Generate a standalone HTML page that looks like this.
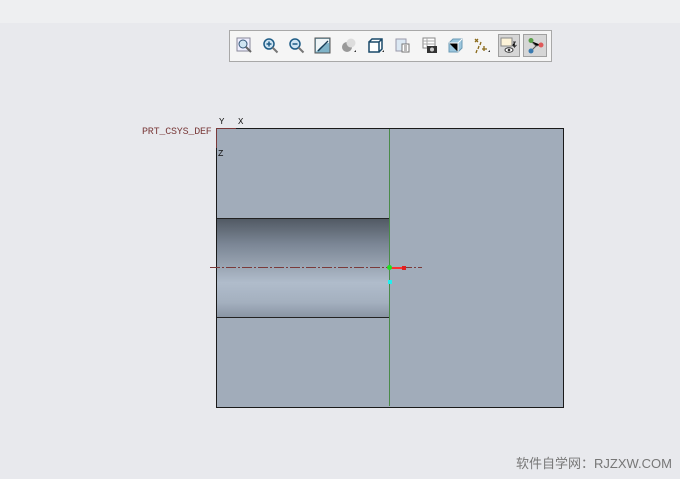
<!DOCTYPE html>
<html><head><style>
*{margin:0;padding:0}
body{width:680px;height:479px;background:#e8e9ed;position:relative;overflow:hidden;font-family:"Liberation Sans",sans-serif}
.a{position:absolute}
svg.i{position:absolute;top:37px;width:17px;height:17px}
</style></head><body>
<div class="a" style="left:0;top:0;width:680px;height:23px;background:#eeeff1"></div>
<div class="a" style="left:229px;top:30px;width:321px;height:30px;background:#f5f5f5;border:1px solid #a8a8a8"></div>
<div class="a" style="left:498px;top:34px;width:22px;height:23px;background:#d6d6d6;border:1px solid #a0a0a0;box-sizing:border-box"></div>
<div class="a" style="left:523px;top:34px;width:24px;height:23px;background:#d6d6d6;border:1px solid #a0a0a0;box-sizing:border-box"></div>
<svg class="i" style="left:236px" viewBox="0 0 17 17"><rect x="1" y="1" width="13" height="13" fill="#eef" stroke="#889"/><circle cx="7" cy="7" r="4" fill="#cfe4f2" stroke="#357"/><path d="M10 10l5 5" stroke="#666" stroke-width="2"/></svg>
<svg class="i" style="left:262px" viewBox="0 0 17 17"><circle cx="7" cy="7" r="5" fill="#cfe4f2" stroke="#1e5c86" stroke-width="1.5"/><path d="M4.5 7h5M7 4.5v5" stroke="#1e5c86" stroke-width="1.5"/><path d="M10.5 10.5l5 5" stroke="#777" stroke-width="2"/></svg>
<svg class="i" style="left:288px" viewBox="0 0 17 17"><circle cx="7" cy="7" r="5" fill="#cfe4f2" stroke="#1e5c86" stroke-width="1.5"/><path d="M4.5 7h5" stroke="#1e5c86" stroke-width="1.5"/><path d="M10.5 10.5l5 5" stroke="#777" stroke-width="2"/></svg>
<svg class="i" style="left:314px" viewBox="0 0 17 17"><rect x="1" y="1" width="15" height="15" fill="#7fb3c8" stroke="#555"/><path d="M2 2h13v4q-6 0-13 9z" fill="#eef4f6"/><path d="M4 14L14 4" stroke="#1a3d55" stroke-width="1.3"/></svg>
<svg class="i" style="left:340px" viewBox="0 0 17 17"><circle cx="7" cy="10" r="5" fill="#999"/><circle cx="11" cy="6" r="4.5" fill="#ddd"/><path d="M14 15h2v-2z" fill="#333"/></svg>
<svg class="i" style="left:367px" viewBox="0 0 17 17"><path d="M2 5h10v10H2zM2 5l3-3h10v10l-3 3M12 5l3-3" fill="#fff" stroke="#1a4a6a" stroke-width="1.5"/><path d="M15 15h2v-2z" fill="#333"/></svg>
<svg class="i" style="left:394px" viewBox="0 0 17 17"><rect x="2" y="2" width="10" height="12" fill="#dbe8f3" stroke="#99a"/><rect x="8" y="7" width="7" height="8" fill="#fff" stroke="#777"/><path d="M10 9h3M10 11h3M10 13h3" stroke="#777"/></svg>
<svg class="i" style="left:421px" viewBox="0 0 17 17"><rect x="2" y="1" width="12" height="10" fill="#fff" stroke="#888"/><path d="M2 4h12M2 7h12M6 1v10" stroke="#aaa"/><rect x="6" y="9" width="10" height="7" fill="#333"/><circle cx="11" cy="12.5" r="2" fill="#ccc"/></svg>
<svg class="i" style="left:447px" viewBox="0 0 17 17"><path d="M2 6l4-4h9v9l-4 4H2z" fill="#9cc7de" stroke="#6a9ab5"/><path d="M2 6h9v9M11 6l4-4" stroke="#fff"/></svg>
<svg class="i" style="left:473px" viewBox="0 0 17 17"><path d="M2 2l3 3M5 2l-3 3M8 5l-1 3M6 9l-1 3M4 13l-1 3M9 12h5M11 9v5" stroke="#8a6a1a" stroke-width="1.3"/><path d="M15 15h2v-2z" fill="#333"/></svg>
<svg class="i" style="left:500px" viewBox="0 0 17 17"><rect x="1" y="1" width="11" height="8" fill="#fdf3d8" stroke="#888"/><path d="M13 5h3M14.5 5v5l-2-2M14.5 10l2-2" stroke="#333"/><ellipse cx="9" cy="13" rx="4" ry="2.3" fill="#fff" stroke="#333"/><circle cx="9" cy="13" r="1.3" fill="#333"/></svg>
<svg class="i" style="left:527px" viewBox="0 0 17 17"><path d="M4 4l5 5 5-1M9 9l-5 5" stroke="#555"/><circle cx="4" cy="3.5" r="2.5" fill="#5aa04a"/><circle cx="14" cy="8" r="2.5" fill="#e05a5a"/><circle cx="4" cy="14" r="2.5" fill="#3a7ab0"/></svg>
<div class="a" style="left:216px;top:128px;width:346px;height:278px;background:#a1acba;border:1px solid #1a1a1a"></div>
<div class="a" style="left:217px;top:218px;width:172px;height:100px;border-top:1px solid #222;border-bottom:1px solid #222;box-sizing:border-box;background:linear-gradient(#525a64 0%,#7a8594 25%,#95a0ae 45%,#b0bccb 65%,#a4b0bf 85%,#8a95a4 100%)"></div>
<div class="a" style="left:389px;top:129px;width:1px;height:277px;background:#4a8a4a"></div>
<div class="a" style="left:210px;top:267px;width:212px;height:1px;background:repeating-linear-gradient(90deg,#7a3a3a 0 10px,transparent 10px 12px,#7a3a3a 12px 14px,transparent 14px 16px)"></div>
<div class="a" style="left:390px;top:267px;width:15px;height:2px;background:#ff3030"></div>
<div class="a" style="left:402px;top:266px;width:4px;height:4px;background:#e02020"></div>
<div class="a" style="left:387px;top:265px;width:5px;height:5px;background:#20e020;border-radius:50%"></div>
<div class="a" style="left:388px;top:280px;width:4px;height:4px;background:#20f0f0"></div>
<div class="a" style="left:216px;top:128px;width:20px;height:1px;background:#7a3a3a"></div>
<div class="a" style="left:216px;top:128px;width:1px;height:20px;background:#7a3a3a"></div>
<div class="a" style="left:142px;top:127px;font-size:10px;color:#7a3a3a;font-family:'Liberation Mono',monospace;letter-spacing:-0.2px">PRT_CSYS_DEF</div>
<div class="a" style="left:219px;top:117px;font-size:9px;color:#111;font-family:'Liberation Mono',monospace">Y</div>
<div class="a" style="left:238px;top:117px;font-size:9px;color:#111;font-family:'Liberation Mono',monospace">X</div>
<div class="a" style="left:218px;top:149px;font-size:9px;color:#111;font-family:'Liberation Mono',monospace">Z</div>
<div class="a" style="left:516px;top:453px;font-size:13px;color:#777;font-family:'Liberation Sans','Noto Sans CJK SC',sans-serif">软件自学网：RJZXW.COM</div>
</body></html>
